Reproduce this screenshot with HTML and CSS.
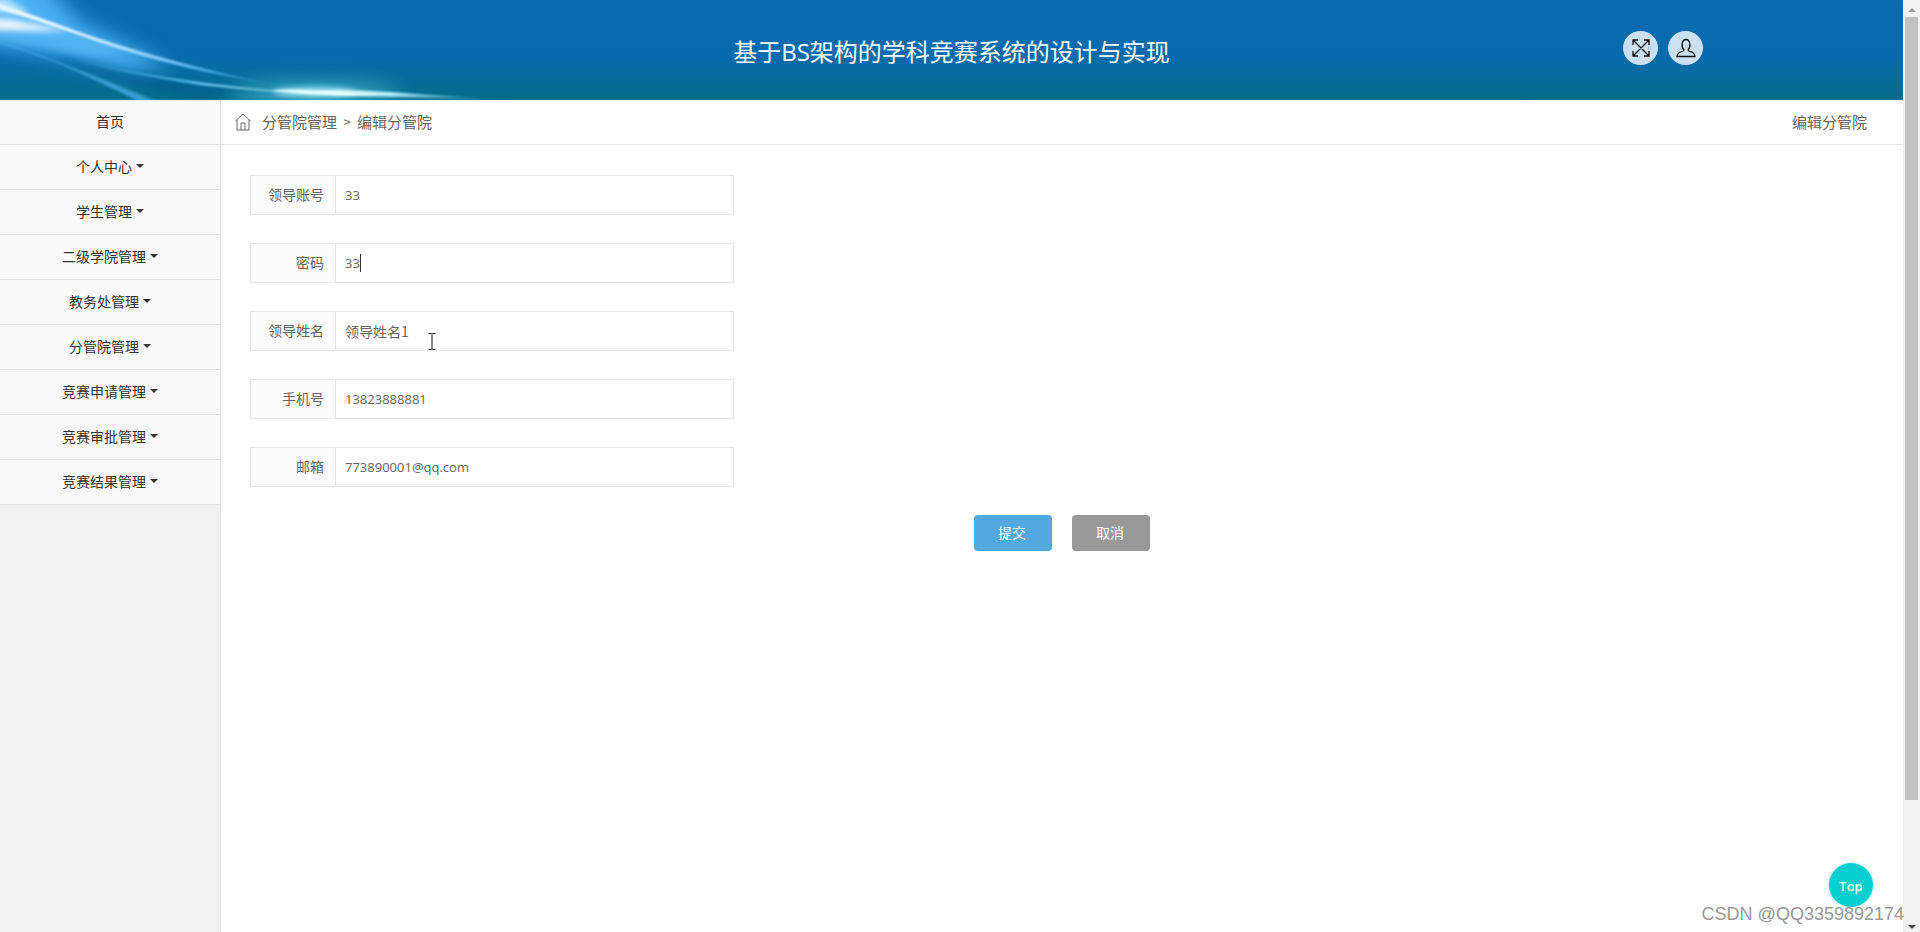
FILE: index.html
```html
<!DOCTYPE html>
<html lang="zh-CN">
<head>
<meta charset="utf-8">
<title>基于BS架构的学科竞赛系统的设计与实现</title>
<link rel="stylesheet" href="styles.css">
</head>
<body>
<div class="window">
  <div class="page">
    <header class="header">
      <svg class="header-art" width="600" height="100" viewBox="0 0 600 100" aria-hidden="true">
        <defs>
          <filter id="soft" filterUnits="userSpaceOnUse" x="-100" y="-100" width="700" height="300"><feGaussianBlur stdDeviation="10"/></filter>
          <filter id="mid" filterUnits="userSpaceOnUse" x="-100" y="-100" width="700" height="300"><feGaussianBlur stdDeviation="3"/></filter>
          <filter id="fine" filterUnits="userSpaceOnUse" x="-40" y="-20" width="680" height="160"><feGaussianBlur stdDeviation="0.8"/></filter>
          <linearGradient id="beam" gradientUnits="userSpaceOnUse" x1="0" x2="280" y1="0" y2="0">
            <stop offset="0" stop-color="#e4f4ff"/>
            <stop offset=".28" stop-color="#e0f4ff"/>
            <stop offset=".5" stop-color="#8fd2ff"/>
            <stop offset=".75" stop-color="#4aabea"/>
            <stop offset="1" stop-color="#3295d2" stop-opacity=".2"/>
          </linearGradient>
          <linearGradient id="tail" gradientUnits="userSpaceOnUse" x1="60" x2="500" y1="0" y2="0">
            <stop offset="0" stop-color="#3da0e4" stop-opacity="0"/>
            <stop offset=".3" stop-color="#56b8ea"/>
            <stop offset=".55" stop-color="#f0ffff"/>
            <stop offset=".75" stop-color="#b0ecf4"/>
            <stop offset="1" stop-color="#4bb0c8" stop-opacity="0"/>
          </linearGradient>
        </defs>
        <path d="M-60-50 45-15 80 22 170 66 130 72 60 54-60 38Z" fill="#4ab0f4" filter="url(#soft)"/>
        <path d="M-40 2 20 14 76 32 130 52 90 56 30 46-40 34Z" fill="#5cb8f5" opacity=".6" filter="url(#mid)"/>
        <path d="M-40 16 10 19 40 25 70 31 30 31-40 29Z" fill="#fff" opacity=".9" filter="url(#mid)"/>
        <path d="M-40-8 8-1 30 12 20 14-40 8Z" fill="#e8f6ff" opacity=".7" filter="url(#mid)"/>
        <path d="M60 57Q130 74 240 90L200 98Q110 84 60 60Z" fill="#00588f" opacity=".5" filter="url(#mid)"/>
        <ellipse cx="315" cy="94" rx="85" ry="11" fill="#42b5d4" opacity=".8" filter="url(#soft)"/>
        <ellipse cx="315" cy="92" rx="42" ry="5" fill="#b5f2ff" opacity=".8" filter="url(#mid)"/>
        <g filter="url(#fine)">
          <path d="M-5 2Q35 15 76 31Q160 60 270 84Q160 66 76 34Q35 20-5 8Z" fill="url(#beam)"/>
          <path d="M-5 40Q30 50 77 70L155 102H140Q100 82 65 66Q30 52-5 42Z" fill="#45a8e8" opacity=".8"/>
          <path d="M40 56Q90 72 165 104H152Q95 78 40 56Z" fill="#3da5d3" opacity=".5"/>
          <path d="M60 55Q130 73 214 84T320 91T500 100L330 95Q270 92 200 85Q110 71 60 56Z" fill="url(#tail)"/>
          <path d="M270 90Q310 88 350 93L380 96Q320 97 270 90Z" fill="#eaffff" opacity=".9"/>
        </g>
      </svg>
      <h1 class="header-title">基于BS架构的学科竞赛系统的设计与实现</h1>
      <div class="header-tools">
        <button class="round-button" type="button" aria-label="全屏">
          <svg width="18" height="18" viewBox="0 0 18 18"><path d="M1.500 1.500l15 15M16.500 1.500l-15 15M1 6V1h5M12 1h5v5M17 12v5h-5M6 17H1v-5"/></svg>
        </button>
        <button class="round-button" type="button" aria-label="用户">
          <svg width="20" height="20" viewBox="0 0 20 20"><path d="M8 12C5 9 5.500 1.500 10 1.500S15 9 12 12q.2 1.200 2.500 1.700 4 1 4.500 4.800H1q.5-3.800 4.500-4.800 2.300-.5 2.500-1.700Z"/></svg>
        </button>
      </div>
    </header>
    <div class="body">
      <nav class="sidebar">
        <a class="menu-item" href="#">首页</a>
        <a class="menu-item has-caret" href="#">个人中心</a>
        <a class="menu-item has-caret" href="#">学生管理</a>
        <a class="menu-item has-caret" href="#">二级学院管理</a>
        <a class="menu-item has-caret" href="#">教务处管理</a>
        <a class="menu-item has-caret" href="#">分管院管理</a>
        <a class="menu-item has-caret" href="#">竞赛申请管理</a>
        <a class="menu-item has-caret" href="#">竞赛审批管理</a>
        <a class="menu-item has-caret" href="#">竞赛结果管理</a>
      </nav>
      <main class="content">
        <div class="crumb-bar">
          <div class="crumbs">
            <svg class="home-icon" width="16" height="18" viewBox="0 0 16 18"><path d="M.5 8 8 1l7.500 7M2 7v10h12V7M6 17v-7h4v7"/></svg>
            <a href="#">分管院管理</a><span class="crumb-sep">&gt;</span><span>编辑分管院</span>
          </div>
          <span class="page-name">编辑分管院</span>
        </div>
        <form class="form">
          <div class="field"><label for="account">领导账号</label><input class="latin" id="account" type="text" value="33"></div>
          <div class="field"><label for="password">密码</label><div class="input-wrap"><input class="latin" id="password" type="text" value="33"><span class="text-caret"></span></div></div>
          <div class="field"><label for="name">领导姓名</label><div class="input-wrap"><input id="name" type="text" value="领导姓名1"><svg class="pointer" width="8" height="17" viewBox="0 0 8 17"><path d="M.5.5h3M4.500.5h3M.5 16.500h3M4.500 16.500h3M4 .5v16"/></svg></div></div>
          <div class="field"><label for="phone">手机号</label><input class="latin" id="phone" type="text" value="13823888881"></div>
          <div class="field"><label for="mail">邮箱</label><input class="latin" id="mail" type="text" value="773890001@qq.com"></div>
          <div class="actions">
            <button class="action submit" type="button">提交</button>
            <button class="action cancel" type="button">取消</button>
          </div>
        </form>
      </main>
    </div>
  </div>
  <div class="scrollbar" aria-hidden="true">
    <span class="arrow up"></span>
    <div class="track"><div class="thumb"></div></div>
    <span class="arrow down"></span>
  </div>
  <button class="top-button" type="button">Top</button>
  <span class="watermark">CSDN @QQ3359892174</span>
</div>
</body>
</html>
```
FILE: styles.css
```css
* { box-sizing: border-box; }
body {
  margin: 0;
  color: #666;
  background: #fff;
  font: 14px/20px "Noto Sans CJK SC", sans-serif;
}
a { color: inherit; text-decoration: none; }
button, input { font: inherit; color: inherit; }
.window { position: relative; display: flex; min-height: 100vh; }
.page { flex: 1; display: flex; flex-direction: column; min-width: 0; }

.header {
  position: relative;
  display: flex;
  align-items: center;
  justify-content: center;
  height: 100px;
  padding-top: 4px;
  overflow: hidden;
  background: linear-gradient(#076cb0 0, #066bad 55%, #066d9c 78%, #056c8b 100%);
}
.header-art { position: absolute; left: 0; top: 0; }
.header-title {
  position: relative;
  margin: 0;
  color: #fff;
  font: 400 24px/32px "Open Sans", "Noto Sans CJK SC", sans-serif;
}
.header-tools { position: absolute; right: 200px; top: 31px; display: flex; gap: 10px; }
.round-button {
  display: flex;
  align-items: center;
  justify-content: center;
  width: 35px;
  height: 34px;
  padding: 0;
  border: 0;
  border-radius: 50%;
  background: #cbe1f1;
}
.round-button svg { fill: none; stroke: #111; stroke-width: 1.3; }

.body { flex: 1; display: flex; }
.sidebar { width: 221px; background: #f0f0f0; border-right: 1px solid #e2e2e2; }
.menu-item {
  display: flex;
  align-items: center;
  justify-content: center;
  height: 45px;
  padding-bottom: 2px;
  color: #333;
  background: #f9f9f9;
  border-bottom: 1px solid #e2e2e2;
}
.has-caret::after {
  content: "";
  margin: 0 0 1px 4px;
  border: 4px solid transparent;
  border-top-color: #333;
  border-bottom: 0;
}

.content { flex: 1; min-width: 0; }
.crumb-bar {
  display: flex;
  align-items: center;
  justify-content: space-between;
  height: 45px;
  padding: 0 36px 0 14px;
  border-bottom: 1px solid #e6e6e6;
  font-size: 15px;
}
.crumbs { display: flex; align-items: center; }
.home-icon { margin-right: 11px; fill: none; stroke: #666; stroke-width: 1; }
.crumb-sep { width: 20px; text-align: center; font-size: 13px; }

.form { padding: 30px 29px; }
.field {
  display: flex;
  width: 484px;
  max-width: 100%;
  height: 40px;
  margin-bottom: 28px;
  border: 1px solid #e6e6e6;
}
.field label {
  width: 85px;
  padding: 8px 11px 10px 0;
  text-align: right;
  background: #fbfbfb;
  border-right: 1px solid #e6e6e6;
}
.field input {
  flex: 1;
  min-width: 0;
  width: 100%;
  height: 38px;
  padding: 0 9px 1px;
  border: 0;
  outline: 0;
  background: transparent;
}
.field .latin { font-family: "Open Sans", sans-serif; font-size: 13px; }
.input-wrap { position: relative; flex: 1; }
.text-caret { position: absolute; left: 24px; top: 10px; width: 1px; height: 18px; background: #333; }
.pointer { position: absolute; left: 92px; top: 21px; fill: none; stroke: #111; }
.actions { display: flex; justify-content: center; gap: 20px; }
.action { width: 78px; height: 36px; padding: 0 2px 2px 0; border: 0; border-radius: 4px; color: #fff; }
.submit { background: #53a8e0; }
.cancel { background: #999; }

.scrollbar {
  display: flex;
  flex-direction: column;
  align-items: center;
  width: 17px;
  padding: 8px 0 3px;
  background: #f1f1f1;
}
.arrow { border: 4px solid transparent; }
.up { border-top: 0; border-bottom-color: #999; }
.down { border-bottom: 0; border-top-color: #444; }
.track { flex: 1; width: 13px; padding: 5px 0 8px; }
.thumb { height: 87%; background: #c1c1c1; }

.top-button {
  position: absolute;
  right: 47px;
  bottom: 25px;
  width: 44px;
  height: 44px;
  padding: 2px 0 0;
  border: 0;
  border-radius: 50%;
  color: #fff;
  background: #05cfd0;
  box-shadow: 0 0 3px #05cfd066;
  font-family: "Open Sans", sans-serif;
  font-size: 13px;
  font-weight: 600;
}
.watermark {
  position: absolute;
  right: 16px;
  bottom: 8px;
  color: #999;
  text-shadow: 1px 1px 0 #fff;
  font: 18px/20px "Liberation Sans", Arial, sans-serif;
}
```
